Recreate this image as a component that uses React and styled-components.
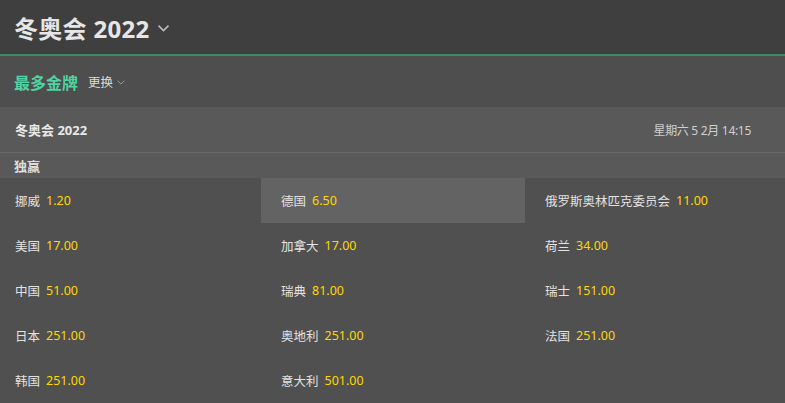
import styled, { createGlobalStyle } from 'styled-components';

const GlobalStyle = createGlobalStyle`
  body {
    margin: 0;
    background: #505050;
    font-family: "Noto Sans", "Noto Sans CJK SC", sans-serif;
  }
`;

const Page = styled.div`
  width: 785px;
  height: 403px;
  overflow: hidden;
  background: #505050;
`;

const Header = styled.header`
  height: 54px;
  display: flex;
  align-items: center;
  padding: 0 14px;
  background: #3f3f3f;
  border-bottom: 2px solid #3c8a68;
`;

const Title = styled.h1`
  margin: 0;
  font-size: 24px;
  font-weight: 700;
  letter-spacing: 0.3px;
  color: #e6e6e6;
  display: flex;
  align-items: center;
  gap: 6px;
`;

const SubBar = styled.div`
  height: 51px;
  display: flex;
  align-items: center;
  gap: 10px;
  padding: 0 14px;
  background: #4e4e4e;
`;

const Tab = styled.span`
  font-size: 16px;
  font-weight: 700;
  color: #4fd3a2;
`;

const Switch = styled.span`
  display: flex;
  align-items: center;
  gap: 3px;
  font-size: 12.5px;
  color: #dcdcdc;
`;

const EventHead = styled.div`
  height: 45px;
  display: flex;
  align-items: center;
  justify-content: space-between;
  padding: 0 34px 0 15px;
  background: #595959;
  border-bottom: 1px solid #6a6a6a;
`;

const EventName = styled.span`
  font-size: 13px;
  font-weight: 700;
  color: #e8e8e8;
`;

const EventDate = styled.span`
  font-size: 12px;
  letter-spacing: -0.3px;
  color: #cfcfcf;
`;

const Market = styled.div`
  height: 25px;
  display: flex;
  align-items: center;
  padding: 0 14px;
  background: #595959;
  font-size: 13px;
  font-weight: 700;
  color: #dedede;
`;

const Grid = styled.div`
  display: grid;
  grid-template-columns: 261px 264px 260px;
`;

const Cell = styled.div`
  height: 45px;
  display: flex;
  align-items: center;
  gap: 6px;
  padding-left: ${p => (p.$first ? '15px' : '20px')};
  background: ${p => (p.$active ? '#636363' : 'transparent')};
  font-size: 12.5px;
`;

const Name = styled.span`
  color: #e2e2e2;
`;

const Odds = styled.span`
  color: #ffd700;
`;

const Chevron = ({ size = 12, color = '#bdbdbd' }) => (
  <svg width={size} height={size} viewBox="0 0 12 12" fill="none">
    <path d="M2 4.5 L6 8.5 L10 4.5" stroke={color} strokeWidth="1.2" />
  </svg>
);

const selections = [
  ['挪威', '1.20'],
  ['德国', '6.50', true],
  ['俄罗斯奥林匹克委员会', '11.00'],
  ['美国', '17.00'],
  ['加拿大', '17.00'],
  ['荷兰', '34.00'],
  ['中国', '51.00'],
  ['瑞典', '81.00'],
  ['瑞士', '151.00'],
  ['日本', '251.00'],
  ['奥地利', '251.00'],
  ['法国', '251.00'],
  ['韩国', '251.00'],
  ['意大利', '501.00'],
];

export default function App() {
  return (
    <Page>
      <GlobalStyle />
      <Header>
        <Title>
          冬奥会 2022
          <Chevron size={15} />
        </Title>
      </Header>
      <SubBar>
        <Tab>最多金牌</Tab>
        <Switch>
          更换
          <Chevron size={10} color="#9a9a9a" />
        </Switch>
      </SubBar>
      <EventHead>
        <EventName>冬奥会 2022</EventName>
        <EventDate>星期六 5 2月 14:15</EventDate>
      </EventHead>
      <Market>独赢</Market>
      <Grid>
        {selections.map(([name, odds, active], i) => (
          <Cell key={name} $first={i % 3 === 0} $active={active}>
            <Name>{name}</Name>
            <Odds>{odds}</Odds>
          </Cell>
        ))}
      </Grid>
    </Page>
  );
}
